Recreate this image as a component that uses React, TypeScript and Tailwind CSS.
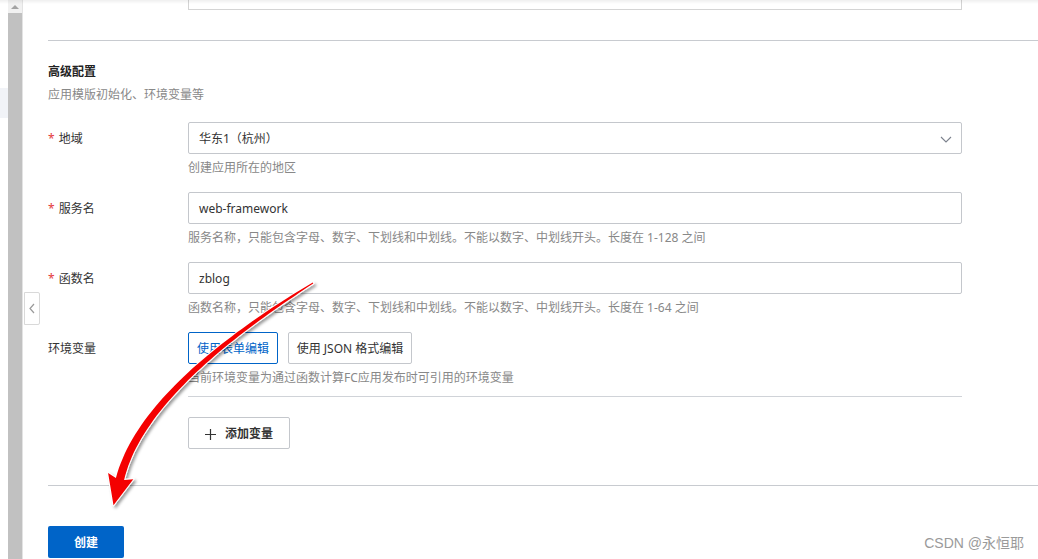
import React from 'react';

// red hand-drawn style arrow that sits over the form
function buildArrow() {
  const p0 = [313, 283];
  const p1 = [236, 331];
  const p2 = [139, 402];
  const p3 = [120, 479];
  const N = 48;
  const left: number[][] = [];
  const right: number[][] = [];
  let ex = 0;
  let ey = 1;
  for (let i = 0; i <= N; i++) {
    const t = i / N;
    const u = 1 - t;
    const x = u * u * u * p0[0] + 3 * u * u * t * p1[0] + 3 * u * t * t * p2[0] + t * t * t * p3[0];
    const y = u * u * u * p0[1] + 3 * u * u * t * p1[1] + 3 * u * t * t * p2[1] + t * t * t * p3[1];
    const dx = 3 * u * u * (p1[0] - p0[0]) + 6 * u * t * (p2[0] - p1[0]) + 3 * t * t * (p3[0] - p2[0]);
    const dy = 3 * u * u * (p1[1] - p0[1]) + 6 * u * t * (p2[1] - p1[1]) + 3 * t * t * (p3[1] - p2[1]);
    const l = Math.hypot(dx, dy);
    const nx = -dy / l;
    const ny = dx / l;
    const w = 0.5 + 3.7 * Math.pow(t, 0.75);
    left.push([x + nx * w, y + ny * w]);
    right.push([x - nx * w, y - ny * w]);
    if (i === N) {
      ex = dx / l;
      ey = dy / l;
    }
  }
  const nx = -ey;
  const ny = ex;
  const bx = p3[0];
  const by = p3[1];
  const barbA = [bx + nx * 13 - ex * 3, by + ny * 13 - ey * 3];
  const barbB = [bx - nx * 13 - ex * 3, by - ny * 13 - ey * 3];
  const tip = [bx + ex * 27, by + ey * 27];
  const f = (p: number[]) => `${p[0].toFixed(1)} ${p[1].toFixed(1)}`;
  let d = `M ${f(left[0])}`;
  for (let i = 1; i <= N; i++) d += ` L ${f(left[i])}`;
  d += ` L ${f(barbA)} L ${f(tip)} L ${f(barbB)}`;
  for (let i = N; i >= 0; i--) d += ` L ${f(right[i])}`;
  return d + ' Z';
}

const arrowD = buildArrow();

function Label({ text, required }: { text: string; required?: boolean }) {
  return (
    <div className="w-[140px] h-[32px] pt-[2px] flex items-center text-[12px] text-[#333] shrink-0">
      {required && <span className="text-[#e4393c] mr-[4px]">*</span>}
      <span>{text}</span>
    </div>
  );
}

function Help({ children }: { children: React.ReactNode }) {
  return <div className="mt-[5px] leading-[18px] text-[12px] text-[#888]">{children}</div>;
}

export default function App() {
  return (
    <div className="relative w-[1038px] h-[559px] overflow-hidden bg-white flex font-['Noto_Sans','Noto_Sans_CJK_SC',sans-serif]">
      {/* left strip */}
      <div className="w-[8px] shrink-0 flex flex-col pt-[88px]">
        <div className="h-[30px] bg-[#f1f3f7]" />
      </div>

      {/* scrollbar */}
      <div className="w-[14px] shrink-0 flex flex-col bg-[#f1f1f1]">
        <div className="h-[13px] flex items-center justify-center">
          <div className="w-0 h-0 border-x-[4px] border-x-transparent border-b-[4px] border-b-[#a3a3a3]" />
        </div>
        <div className="flex-1 bg-[#c1c1c1]" />
      </div>

      {/* main */}
      <div className="flex-1 border-l border-[#e3e3e3] pl-[25px]">
        <div className="ml-[140px] w-[774px] h-[10px] border-x border-b border-[#d4d4d4]" />
        <div className="mt-[30px] h-px bg-[#c8cbd0]" />

        <div className="mt-[22px] leading-[18px] text-[12px] font-bold text-[#222]">高级配置</div>
        <div className="mt-[5px] leading-[18px] text-[12px] text-[#888]">应用模版初始化、环境变量等</div>

        {/* 地域 */}
        <div className="mt-[18px] flex">
          <Label text="地域" required />
          <div className="w-[774px]">
            <div className="h-[32px] pt-[2px] border border-[#c4c7cc] rounded-[2px] flex items-center justify-between pl-[10px] pr-[9px] text-[12px] text-[#333]">
              <span>华东1（杭州）</span>
              <svg width="12" height="7" viewBox="0 0 12 7" fill="none">
                <path d="M1 1 L6 6 L11 1" stroke="#7c828d" strokeWidth="1.1" />
              </svg>
            </div>
            <Help>创建应用所在的地区</Help>
          </div>
        </div>

        {/* 服务名 */}
        <div className="mt-[15px] flex">
          <Label text="服务名" required />
          <div className="w-[774px]">
            <div className="h-[32px] pt-[2px] border border-[#c4c7cc] rounded-[2px] flex items-center px-[10px] text-[12px] text-[#333]">
              web-framework
            </div>
            <Help>服务名称，只能包含字母、数字、下划线和中划线。不能以数字、中划线开头。长度在 1-128 之间</Help>
          </div>
        </div>

        {/* 函数名 */}
        <div className="mt-[15px] flex">
          <Label text="函数名" required />
          <div className="w-[774px]">
            <div className="h-[32px] pt-[2px] border border-[#c4c7cc] rounded-[2px] flex items-center px-[10px] text-[12px] text-[#333]">
              zblog
            </div>
            <Help>函数名称，只能包含字母、数字、下划线和中划线。不能以数字、中划线开头。长度在 1-64 之间</Help>
          </div>
        </div>

        {/* 环境变量 */}
        <div className="mt-[15px] flex">
          <Label text="环境变量" />
          <div className="w-[774px]">
            <div className="flex gap-[10px]">
              <div className="h-[32px] w-[90px] pt-[2px] border border-[#0064c8] rounded-[2px] flex items-center justify-center text-[12px] text-[#0064c8]">
                使用表单编辑
              </div>
              <div className="h-[32px] w-[124px] pt-[2px] border border-[#c4c7cc] rounded-[2px] flex items-center justify-center text-[12px] text-[#333]">
                使用 JSON 格式编辑
              </div>
            </div>
            <Help>当前环境变量为通过函数计算FC应用发布时可引用的环境变量</Help>
            <div className="mt-[9px] h-px bg-[#d0d3d8]" />
            <div className="mt-[20px] h-[32px] w-[102px] pt-[2px] border border-[#c4c7cc] rounded-[2px] flex items-center pl-[16px] gap-[9px] text-[12px] text-[#333] font-bold">
              <svg width="11" height="11" viewBox="0 0 11 11">
                <path d="M5.5 0 V11 M0 5.5 H11" stroke="#333" strokeWidth="1.2" />
              </svg>
              <span>添加变量</span>
            </div>
          </div>
        </div>

        <div className="mt-[36px] h-px bg-[#c8cbd0]" />

        <div className="mt-[40px] h-[32px] w-[76px] pt-[2px] bg-[#0064c8] rounded-[2px] flex items-center justify-center text-[12px] font-bold text-white">
          创建
        </div>
      </div>

      {/* top shadow */}
      <div className="absolute top-0 inset-x-0 h-[4px] bg-gradient-to-b from-[#00000010] to-transparent pointer-events-none" />

      {/* collapse tab */}
      <div className="absolute left-[24px] top-[292px] w-[16px] h-[33px] bg-white border border-[#d9d9d9] rounded-r-[2px] flex items-center justify-center">
        <svg width="6" height="11" viewBox="0 0 6 11" fill="none">
          <path d="M5 1 L1 5.5 L5 10" stroke="#9a9a9a" strokeWidth="1.2" />
        </svg>
      </div>

      {/* arrow */}
      <svg className="absolute inset-0 pointer-events-none" width="1038" height="559" viewBox="0 0 1038 559">
        <defs>
          <filter id="ash" x="-20%" y="-20%" width="140%" height="140%">
            <feDropShadow dx="2" dy="2" stdDeviation="1.6" floodColor="#000" floodOpacity="0.4" />
          </filter>
        </defs>
        <path
          d={arrowD}
          fill="#f40000"
          stroke="#ffffff"
          strokeWidth="2"
          strokeLinejoin="round"
          paintOrder="stroke"
          filter="url(#ash)"
        />
      </svg>

      {/* watermark */}
      <div className="absolute right-[14px] bottom-[8px] leading-[16px] text-[14px] text-[#9a9a9a] font-['Liberation_Sans','Noto_Sans_CJK_SC',sans-serif]">
        CSDN @永恒耶
      </div>
    </div>
  );
}
